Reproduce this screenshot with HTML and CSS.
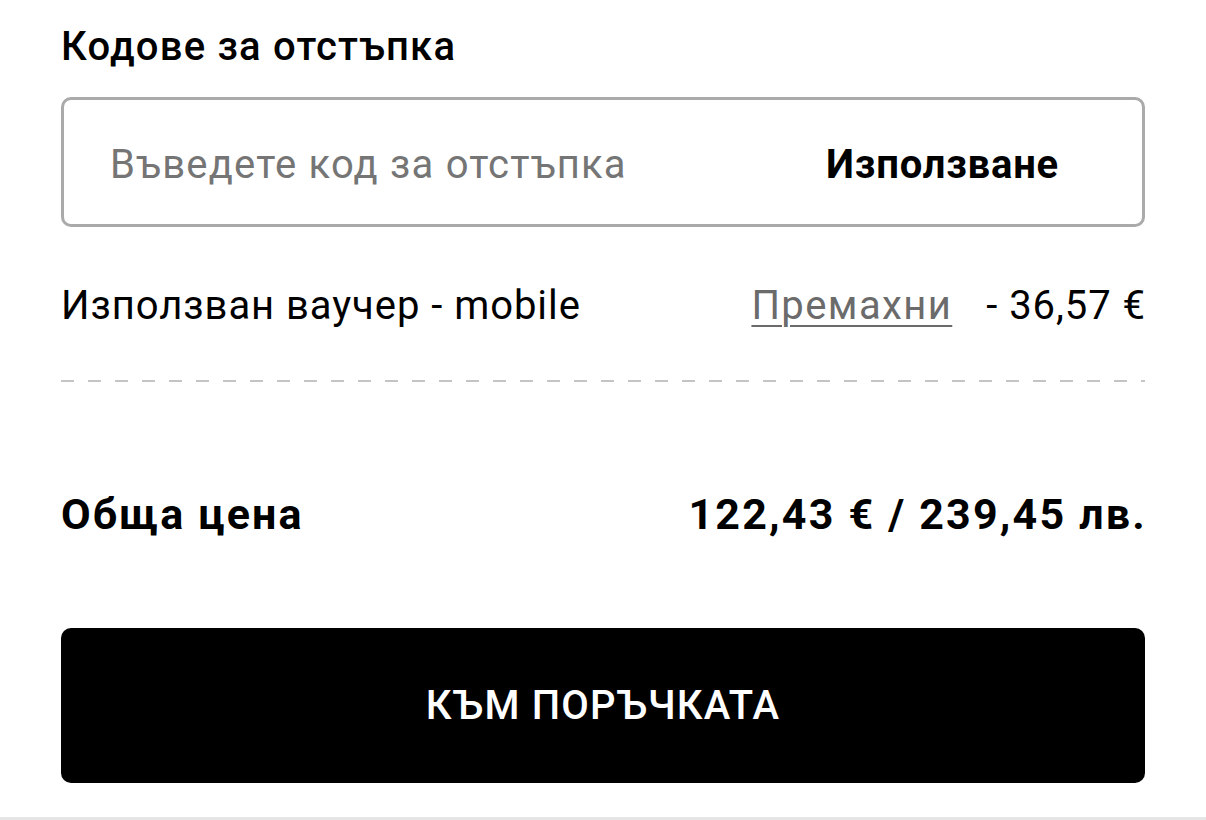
FILE: index.html
```html
<!DOCTYPE html>
<html lang="bg">
<head>
    <meta charset="UTF-8">
    <meta name="viewport" content="width=device-width, initial-scale=1.0">
    <title>Количка - Кодове за отстъпка</title>
    <link rel="stylesheet" href="styles.css">
</head>
<body>
    <div class="container">
        <h2 class="section-title">Кодове за отстъпка</h2>

        <!-- Discount code field -->
        <div class="code-box">
            <input type="text" class="code-input" placeholder="Въведете код за отстъпка">
            <button type="button" class="code-apply">Използване</button>
        </div>

        <!-- Applied voucher -->
        <div class="voucher-row">
            <span class="voucher-name">Използван ваучер - mobile</span>
            <a href="#" class="voucher-remove">Премахни</a>
            <span class="voucher-amount">- 36,57 €</span>
        </div>

        <div class="dashed"></div>

        <div class="total-row">
            <span>Обща цена</span>
            <span>122,43 € / 239,45 лв.</span>
        </div>

        <button type="button" class="btn-order">КЪМ ПОРЪЧКАТА</button>
    </div>
    <div class="bottom-bar"></div>
</body>
</html>
```

FILE: styles.css
```css
/* General Styles */
body {
    font-family: Roboto, "Noto Sans", sans-serif;
    color: #000;
    background-color: #fff;
    margin: 0;
    padding: 0;
}
.container {
    padding: 0 61px;
}
.section-title {
    font-size: 40px;
    font-weight: 500;
    letter-spacing: 1.2px;
    line-height: 48px;
    margin: 23px 0 0;
}
.code-box {
    display: flex;
    align-items: center;
    height: 130px;
    box-sizing: border-box;
    margin-top: 26px;
    padding: 4px 83px 0 46px;
    border: 3px solid #aaa;
    border-radius: 10px;
}
.code-input {
    flex: 1;
    min-width: 0;
    border: none;
    outline: none;
    font-family: inherit;
    font-size: 40px;
    letter-spacing: 1.2px;
    color: #000;
    padding: 0;
    background: transparent;
}
.code-input::placeholder {
    color: #757575;
}
.code-apply {
    border: none;
    background: none;
    padding: 0;
    font-family: inherit;
    font-size: 40px;
    font-weight: 700;
    letter-spacing: 0.8px;
    color: #000;
    cursor: pointer;
}
.voucher-row {
    display: flex;
    align-items: center;
    margin-top: 55px;
    line-height: 48px;
    font-size: 40px;
    letter-spacing: 0.95px;
}
.voucher-name {
    flex: 1;
}
.voucher-remove {
    color: #6b6b6b;
    letter-spacing: 1.4px;
    text-decoration: underline;
    text-underline-offset: 6px;
    text-decoration-thickness: 2px;
    margin-right: 34px;
}
.voucher-amount {
    margin-right: -1px;
}
.dashed {
    height: 2px;
    margin-top: 50px;
    background: repeating-linear-gradient(to right, #c4c4c4 0 13px, transparent 13px 27px);
}
.total-row {
    display: flex;
    justify-content: space-between;
    margin-top: 107px;
    line-height: 50px;
    font-size: 43px;
    font-weight: 700;
    letter-spacing: 2.2px;
}
.total-row span:last-child {
    margin-right: -2px;
}
.btn-order {
    display: block;
    width: 100%;
    height: 155px;
    margin-top: 89px;
    border: none;
    border-radius: 10px;
    background-color: #000;
    color: #fff;
    font-family: inherit;
    font-size: 40px;
    font-weight: 500;
    letter-spacing: 1.15px;
    cursor: pointer;
}
.bottom-bar {
    margin-top: 34px;
    height: 4px;
    background-color: #e5e5e5;
}
```
